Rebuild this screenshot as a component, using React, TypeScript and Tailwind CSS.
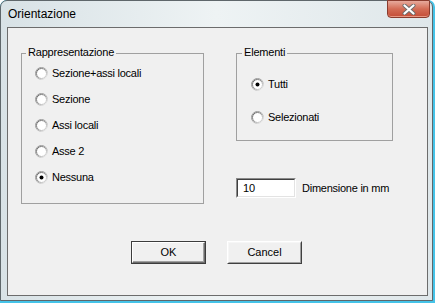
import React from "react";

const font = { fontFamily: '"Liberation Sans", Arial, sans-serif' };

function Radio({ checked }: { checked?: boolean }) {
  return (
    <svg width="13" height="13" viewBox="0 0 13 13" className="shrink-0">
      <defs>
        <linearGradient id="ro" x1="0" y1="0" x2="1" y2="1">
          <stop offset="0" stopColor="#8c8c8c" />
          <stop offset="0.5" stopColor="#a8a8a8" />
          <stop offset="1" stopColor="#ffffff" />
        </linearGradient>
        <linearGradient id="ri" x1="0" y1="0" x2="1" y2="1">
          <stop offset="0" stopColor="#5a5a5a" />
          <stop offset="0.5" stopColor="#9a9a9a" />
          <stop offset="1" stopColor="#e4e4e4" />
        </linearGradient>
      </defs>
      <circle cx="6.5" cy="6.5" r="6" fill="none" stroke="url(#ro)" strokeWidth="1" />
      <circle cx="6.5" cy="6.5" r="5" fill="#ffffff" stroke="url(#ri)" strokeWidth="1" />
      {checked && <circle cx="6.5" cy="6.5" r="2" fill="#000" />}
    </svg>
  );
}

function RadioRow({ label, checked, h }: { label: string; checked?: boolean; h: string }) {
  return (
    <div className={`flex items-center gap-[4px] ${h}`}>
      <Radio checked={checked} />
      <span className="text-[11px] leading-[13px] tracking-[-0.25px] text-black">{label}</span>
    </div>
  );
}

export default function App() {
  return (
    <div className="w-[435px] h-[303px] bg-white" style={font}>
      <div className="w-[435px] h-[303px] rounded-t-[7px] bg-[#45c3e8] pr-[2px] pb-[2px]">
        <div className="w-[433px] h-[301px] rounded-t-[7px] border border-[#5f676b] bg-gradient-to-r from-[#d8e2e6] via-[#eef3f4] to-[#dfe7ea] flex flex-col">
          {/* Title bar */}
          <div className="h-[26px] flex items-start justify-between shrink-0">
            <span className="pl-[7px] pt-[5px] text-[12px] leading-[16px] text-black">Orientazione</span>
            <div className="-mt-[1px] mr-[2px] w-[43px] h-[18px] rounded-b-[4px] border border-[#8a3c2e] bg-gradient-to-b from-[#e6aa9c] via-[#d36c55] to-[#c44d37] flex items-center justify-center shadow-[inset_0_-1px_0_rgba(255,200,180,0.6)]">
              <svg width="14" height="11" viewBox="0 0 14 11">
                <path d="M2.5 1.5 L11.5 9.5 M11.5 1.5 L2.5 9.5" stroke="#6b6b6b" strokeWidth="4" strokeLinecap="round" />
                <path d="M2.5 1.5 L11.5 9.5 M11.5 1.5 L2.5 9.5" stroke="#ffffff" strokeWidth="2.2" strokeLinecap="round" />
              </svg>
            </div>
          </div>
          {/* Client area */}
          <div className="ml-[6px] mr-[4px] mb-[4px] flex-1 border border-[#6c6c6c] bg-[#f0f0f0] flex flex-col pl-[13px] pt-[25px]">
            <div className="flex items-start">
              {/* Rappresentazione */}
              <div className="relative w-[183px] h-[151px] border border-[#a0a0a0] pt-[6px] pl-[13px]">
                <span className="absolute -top-[8px] left-[4px] px-[2px] bg-[#f0f0f0] text-[11px] leading-[13px] tracking-[-0.2px] text-black">
                  Rappresentazione
                </span>
                <RadioRow h="h-[26px]" label="Sezione+assi locali" />
                <RadioRow h="h-[26px]" label="Sezione" />
                <RadioRow h="h-[26px]" label="Assi locali" />
                <RadioRow h="h-[26px]" label="Asse 2" />
                <RadioRow h="h-[26px]" label="Nessuna" checked />
              </div>
              {/* Right column */}
              <div className="ml-[32px] flex flex-col">
                <div className="relative w-[157px] h-[88px] border border-[#a0a0a0] pt-[14px] pl-[14px]">
                  <span className="absolute -top-[8px] left-[5px] px-[2px] bg-[#f0f0f0] text-[11px] leading-[13px] tracking-[-0.2px] text-black">
                    Elementi
                  </span>
                  <RadioRow h="h-[33px]" label="Tutti" checked />
                  <RadioRow h="h-[33px]" label="Selezionati" />
                </div>
                <div className="mt-[37px] flex items-center">
                  <div className="w-[60px] h-[20px] border border-t-[#8a8a8a] border-l-[#8a8a8a] border-b-white border-r-white">
                    <div className="w-full h-full border border-t-[#404040] border-l-[#404040] border-b-[#e3e3e3] border-r-[#e3e3e3] bg-white pl-[5px] flex items-center">
                      <span className="text-[11px] leading-[13px] text-black">10</span>
                    </div>
                  </div>
                  <span className="ml-[6px] text-[11px] leading-[13px] tracking-[-0.25px] text-black">Dimensione in mm</span>
                </div>
              </div>
            </div>
            {/* Buttons */}
            <div className="mt-[37px] ml-[110px] flex gap-[21px]">
              <div className="w-[75px] h-[23px] border border-[#3c3c3c]">
                <div className="w-full h-full border border-t-white border-l-white border-b-[#6c6c6c] border-r-[#6c6c6c] bg-[#f0f0f0] flex items-center justify-center shadow-[inset_-1px_-1px_0_#a0a0a0]">
                  <span className="text-[11px] leading-[13px] text-black">OK</span>
                </div>
              </div>
              <div className="w-[75px] h-[23px] border border-t-white border-l-white border-b-[#404040] border-r-[#404040]">
                <div className="w-full h-full border border-t-[#f6f6f6] border-l-[#f6f6f6] border-b-[#a0a0a0] border-r-[#a0a0a0] bg-[#f0f0f0] flex items-center justify-center">
                  <span className="text-[11px] leading-[13px] text-black">Cancel</span>
                </div>
              </div>
            </div>
          </div>
        </div>
      </div>
    </div>
  );
}
